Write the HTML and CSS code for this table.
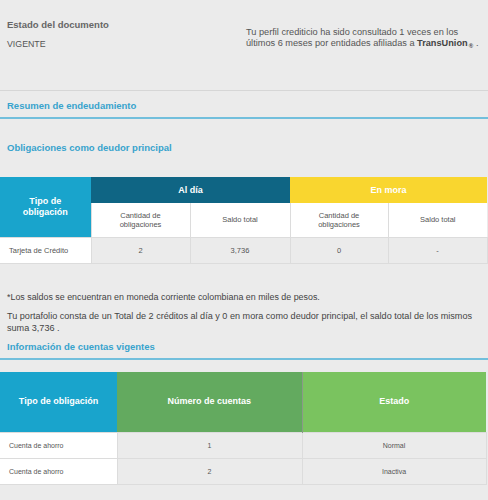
FILE: index.html
```html
<!DOCTYPE html>
<html lang="es">
<head>
<meta charset="utf-8">
<link rel="stylesheet" href="styles.css">
</head>
<body>
<div class="page">
  <div class="top">
    <div class="doc">
      <div class="doc-title">Estado del documento</div>
      <div class="doc-value">VIGENTE</div>
    </div>
    <div class="consult">
      <div class="line">Tu perfil crediticio ha sido consultado 1 veces en los</div>
      <div class="line">últimos 6 meses por entidades afiliadas a <b>TransUnion</b><span class="reg">®</span>.</div>
    </div>
  </div>

  <h2 class="section">Resumen de endeudamiento</h2>
  <h3 class="subsection">Obligaciones como deudor principal</h3>

  <table class="t1">
    <colgroup><col class="c1"><col class="c2"><col class="c3"><col class="c4"><col class="c5"></colgroup>
    <tr class="h1">
      <th rowspan="2" class="blue">Tipo de<br>obligación</th>
      <th colspan="2" class="teal">Al día</th>
      <th colspan="2" class="yellow">En mora</th>
    </tr>
    <tr class="h2">
      <td>Cantidad de<br>obligaciones</td>
      <td>Saldo total</td>
      <td>Cantidad de<br>obligaciones</td>
      <td>Saldo total</td>
    </tr>
    <tr class="data">
      <td class="name">Tarjeta de Crédito</td>
      <td>2</td>
      <td>3,736</td>
      <td>0</td>
      <td>-</td>
    </tr>
  </table>

  <p class="note">*Los saldos se encuentran en moneda corriente colombiana en miles de pesos.</p>
  <p class="summary">Tu portafolio consta de un Total de 2 créditos al día y 0 en mora como deudor principal, el saldo total de los mismos suma 3,736 .</p>

  <h2 class="section section2">Información de cuentas vigentes</h2>

  <table class="t2">
    <colgroup><col class="d1"><col class="d2"><col class="d3"></colgroup>
    <tr class="hh">
      <th class="blue">Tipo de obligación</th>
      <th class="green">Número de cuentas</th>
      <th class="lgreen">Estado</th>
    </tr>
    <tr class="data">
      <td class="name">Cuenta de ahorro</td>
      <td>1</td>
      <td>Normal</td>
    </tr>
    <tr class="data">
      <td class="name">Cuenta de ahorro</td>
      <td>2</td>
      <td>Inactiva</td>
    </tr>
  </table>
</div>
</body>
</html>
```
FILE: styles.css
```css
html, body {
  margin: 0;
  padding: 0;
  background: #ebebeb;
}
body {
  font-family: "Liberation Sans", Arial, sans-serif;
  color: #555;
  width: 488px;
  height: 500px;
  overflow: hidden;
}
.page {
  display: flex;
  flex-direction: column;
}
.top {
  display: flex;
  padding: 19px 7px 0 7px;
  height: 71px;
  border-bottom: 1px solid #d6d6d6;
}
.doc {
  width: 240px;
}
.doc-title {
  font-size: 9.5px;
  font-weight: bold;
  line-height: 12px;
  color: #666;
}
.doc-value {
  font-size: 8.8px;
  line-height: 12px;
  margin-top: 7px;
  color: #555;
}
.consult {
  font-size: 9.2px;
  line-height: 11px;
  margin-top: 8px;
  width: 236px;
  color: #555;
}
.line {
  white-space: nowrap;
}
.consult b {
  color: #444;
}
.reg {
  font-size: 6px;
  font-weight: bold;
  line-height: 6px;
  vertical-align: -2px;
  margin: 0 3px 0 1px;
  color: #444;
}
.section {
  margin: 0;
  font-size: 9.5px;
  line-height: 12px;
  font-weight: bold;
  color: #38a3cd;
  padding: 9px 7px 5px 7px;
  border-bottom: 2px solid #72bfdc;
}
.subsection {
  margin: 23px 0 0 0;
  padding: 0 7px;
  font-size: 9.5px;
  line-height: 12px;
  font-weight: bold;
  color: #38a3cd;
}
table {
  border-collapse: collapse;
  table-layout: fixed;
  text-align: center;
}
.t1 {
  width: 487px;
  margin-top: 23px;
}
.c1 { width: 91px; }
.c2 { width: 99px; }
.c3 { width: 100px; }
.c4 { width: 98px; }
.c5 { width: 99px; }
th {
  color: #fff;
  font-size: 9px;
  font-weight: bold;
  line-height: 11px;
  padding: 0;
}
.blue { background: #19a4cc; }
.teal { background: #0f6584; }
.yellow { background: #f9d62f; }
.green { background: #63aa5f; }
.lgreen { background: #7ac35f; border-left: 1px solid #8a9a88; }
.t1 .h1 { height: 26px; }
.t1 .h2 { height: 34px; }
.h2 td {
  background: #fff;
  font-size: 7.5px;
  line-height: 9px;
  color: #555;
  border-left: 1px solid #dcdcdc;
  padding: 0;
}
td {
  padding: 0;
}
.data td {
  background: #ebebeb;
  border: 1px solid #dcdcdc;
  font-size: 7.5px;
  color: #555;
}
.data td.name {
  background: #fff;
  border-left: none;
}
.t1 .data { height: 26px; }
.note {
  margin: 27px 7px 0 7px;
  font-size: 8.9px;
  line-height: 12px;
  color: #444;
}
.summary {
  margin: 7px 7px 0 7px;
  width: 468px;
  font-size: 9.1px;
  line-height: 12px;
  color: #444;
}
.section2 {
  padding-top: 7px;
  padding-bottom: 5px;
}
.t2 {
  width: 486px;
  margin-top: 12px;
}
.d1 { width: 117px; }
.d2 { width: 185px; }
.d3 { width: 184px; }
.t2 .hh { height: 61px; }
.t2 .data { height: 26px; }
.t2 .data td { font-size: 7px; }
.t2 .data td.name, .t1 .data td.name {
  text-align: left;
  padding-left: 9px;
}
```
